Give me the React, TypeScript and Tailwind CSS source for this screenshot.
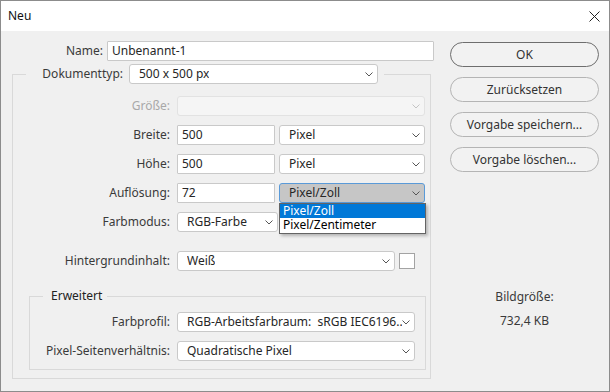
import clsx from "clsx";

const Chevron = ({ muted = false }: { muted?: boolean }) => (
  <svg width="8" height="5" viewBox="0 0 8 5" className="shrink-0">
    <polyline
      points="0.5,0.5 4,4 7.5,0.5"
      fill="none"
      stroke={muted ? "#c4c4c4" : "#555555"}
      strokeWidth="1"
    />
  </svg>
);

function Select({
  value,
  className,
  disabled,
  active,
}: {
  value?: string;
  className?: string;
  disabled?: boolean;
  active?: boolean;
}) {
  return (
    <div
      className={clsx(
        "flex h-[20px] items-center justify-between rounded-[3px] border pl-[9px] pr-[4px]",
        disabled && "border-[#e2e2e2] bg-[#f5f5f5]",
        active && "border-[#5a9ad8] bg-[#c6c6c6]",
        !disabled && !active && "border-[#c9c9c9] bg-white",
        className
      )}
    >
      <span className="overflow-hidden whitespace-pre text-[#262626]">{value}</span>
      <Chevron muted={disabled} />
    </div>
  );
}

function TextInput({ value, className }: { value: string; className?: string }) {
  return (
    <div
      className={clsx(
        "flex h-[20px] items-center rounded-[1px] border border-[#c9c9c9] bg-white pl-[4px] text-[#262626]",
        className
      )}
    >
      {value}
    </div>
  );
}

function Row({
  label,
  labelWidth,
  disabled,
  children,
  className,
}: {
  label: string;
  labelWidth: string;
  disabled?: boolean;
  children: React.ReactNode;
  className?: string;
}) {
  return (
    <div className={clsx("flex h-[20px] items-center", className)}>
      <span
        className={clsx(
          "shrink-0 text-right",
          labelWidth,
          disabled ? "text-[#a8a8a8]" : "text-[#3a3a3a]"
        )}
      >
        {label}
      </span>
      <div className="ml-[7px] flex items-center">{children}</div>
    </div>
  );
}

function PillButton({ label, primary }: { label: string; primary?: boolean }) {
  return (
    <button
      className={clsx(
        "flex h-[25px] w-[149px] items-center justify-center rounded-full border bg-[#f2f2f2] text-[#333]",
        primary ? "border-[#6e6e6e]" : "border-[#b4b4b4]"
      )}
    >
      {label}
    </button>
  );
}

export default function App() {
  return (
    <div className="flex h-[392px] w-[610px] flex-col border border-[#8c8c8c] bg-[#f0f0f0] font-['Noto_Sans',sans-serif] text-[12px] leading-[20px] text-[#333]">
      {/* Title bar */}
      <div className="flex h-[30px] shrink-0 items-center justify-between bg-white pl-[7px] pr-[9px]">
        <span className="text-[12px] text-[#111]">Neu</span>
        <svg width="11" height="11" viewBox="0 0 11 11">
          <path d="M0.5 0.5 L10.5 10.5 M10.5 0.5 L0.5 10.5" stroke="#222" strokeWidth="1" />
        </svg>
      </div>

      {/* Body */}
      <div className="flex flex-1 pt-[10px]">
        {/* Left column */}
        <div className="flex w-[434px] flex-col">
          <div className="flex h-[20px] items-center">
            <span className="w-[102px] text-right text-[#3a3a3a]">Name:</span>
            <TextInput value="Unbenannt-1" className="ml-[4px] w-[327px]" />
          </div>

          <fieldset className="ml-[11px] mt-[3px] w-[419px] border border-[#d9d9d9] px-0 pb-[8px]">
            <legend className="ml-[13px] p-0">
              <div className="flex h-[20px] items-center pr-[6px]">
                <span className="w-[97px] text-right text-[#3a3a3a]">Dokumenttyp:</span>
                <Select value="500 x 500 px" className="ml-[6px] w-[249px]" />
              </div>
            </legend>

            <div className="mt-[12px] flex flex-col gap-[9px]">
              <Row label="Größe:" labelWidth="w-[157px]" disabled>
                <Select disabled className="w-[248px]" />
              </Row>
              <Row label="Breite:" labelWidth="w-[157px]">
                <TextInput value="500" className="w-[98px]" />
                <Select value="Pixel" className="ml-[4px] w-[146px]" />
              </Row>
              <Row label="Höhe:" labelWidth="w-[157px]">
                <TextInput value="500" className="w-[98px]" />
                <Select value="Pixel" className="ml-[4px] w-[146px]" />
              </Row>
              <Row label="Auflösung:" labelWidth="w-[157px]">
                <TextInput value="72" className="w-[98px]" />
                <div className="relative ml-[4px]">
                  <Select value="Pixel/Zoll" active className="w-[146px]" />
                  {/* open dropdown list */}
                  <div className="absolute left-0 top-full z-10 w-[147px] border border-[#646464] bg-white leading-[14px] text-black shadow-[2px_2px_3px_rgba(0,0,0,0.25)]">
                    <div className="bg-[#0078d7] pl-[3px] text-white">Pixel/Zoll</div>
                    <div className="pb-[1px] pl-[3px]">Pixel/Zentimeter</div>
                  </div>
                </div>
              </Row>
              <Row label="Farbmodus:" labelWidth="w-[157px]">
                <Select value="RGB-Farbe" className="w-[101px]" />
              </Row>
              <Row label="Hintergrundinhalt:" labelWidth="w-[157px]" className="mt-[10px]">
                <Select value="Weiß" className="w-[218px]" />
                <div className="ml-[4px] h-[16px] w-[16px] border border-[#a3a3a3] bg-white" />
              </Row>
            </div>

            <fieldset className="ml-[16px] mt-[17px] w-[397px] border border-[#d9d9d9] px-0 pb-[8px]">
              <legend className="ml-[13px] pl-[8px] pr-[5px] leading-[16px] text-[#222]">Erweitert</legend>
              <div className="mt-[8px] flex flex-col gap-[9px]">
                <Row label="Farbprofil:" labelWidth="w-[140px]">
                  <Select value="RGB-Arbeitsfarbraum:  sRGB IEC6196..." className="w-[238px]" />
                </Row>
                <Row label="Pixel-Seitenverhältnis:" labelWidth="w-[140px]">
                  <Select value="Quadratische Pixel" className="w-[238px]" />
                </Row>
              </div>
            </fieldset>
          </fieldset>
        </div>

        {/* Right column */}
        <div className="ml-[15px] flex w-[149px] flex-col items-center">
          <div className="mt-[1px] flex flex-col gap-[10px]">
            <PillButton label="OK" primary />
            <PillButton label="Zurücksetzen" />
            <PillButton label="Vorgabe speichern..." />
            <PillButton label="Vorgabe löschen..." />
          </div>
          <div className="mt-[115px] text-[#3a3a3a]">Bildgröße:</div>
          <div className="mt-[4px] text-[#3a3a3a]">732,4 KB</div>
        </div>
      </div>
    </div>
  );
}
